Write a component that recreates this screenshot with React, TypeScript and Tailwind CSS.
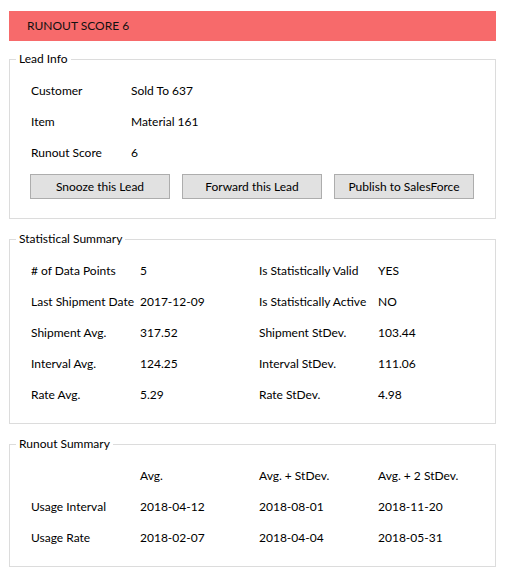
import type { ReactNode } from 'react'

type Pair = [string, string]

const leadInfo: Pair[] = [
  ['Customer', 'Sold To 637'],
  ['Item', 'Material 161'],
  ['Runout Score', '6'],
]

const statsLeft: Pair[] = [
  ['# of Data Points', '5'],
  ['Last Shipment Date', '2017-12-09'],
  ['Shipment Avg.', '317.52'],
  ['Interval Avg.', '124.25'],
  ['Rate Avg.', '5.29'],
]

const statsRight: Pair[] = [
  ['Is Statistically Valid', 'YES'],
  ['Is Statistically Active', 'NO'],
  ['Shipment StDev.', '103.44'],
  ['Interval StDev.', '111.06'],
  ['Rate StDev.', '4.98'],
]

const runoutRows: string[][] = [
  ['', 'Avg.', 'Avg. + StDev.', 'Avg. + 2 StDev.'],
  ['Usage Interval', '2018-04-12', '2018-08-01', '2018-11-20'],
  ['Usage Rate', '2018-02-07', '2018-04-04', '2018-05-31'],
]

function GroupBox({ title, children }: { title: string; children: ReactNode }) {
  return (
    <fieldset className="border border-[#dcdcdc]">
      <legend className="ml-[6px] px-[3px] leading-4">{title}</legend>
      <div className="px-[21px] pt-[8px] pb-[13px]">{children}</div>
    </fieldset>
  )
}

function ActionButton({ children }: { children: ReactNode }) {
  return (
    <button className="h-[25px] w-[140px] border border-[#adadad] bg-[#e1e1e1] text-center leading-4">
      {children}
    </button>
  )
}

export default function App() {
  return (
    <div className="flex w-[508px] flex-col gap-[12px] bg-white pr-[12px] pl-[9px] pt-[11px] text-[12px] text-black [font-family:Lato,'Liberation_Sans',sans-serif]">
      <div className="mb-[-2px] flex h-[30px] items-center bg-[#f76a6b] pl-[18px] text-[#111]">
        RUNOUT SCORE 6
      </div>

      <GroupBox title="Lead Info">
        {leadInfo.map(([label, value]) => (
          <div key={label} className="flex h-[31px] items-center">
            <span className="w-[100px]">{label}</span>
            <span>{value}</span>
          </div>
        ))}
        <div className="mt-[6px] mb-[6px] -ml-[1px] flex gap-[12px]">
          <ActionButton>Snooze this Lead</ActionButton>
          <ActionButton>Forward this Lead</ActionButton>
          <ActionButton>Publish to SalesForce</ActionButton>
        </div>
      </GroupBox>

      <GroupBox title="Statistical Summary">
        {statsLeft.map(([label, value], i) => (
          <div key={label} className="flex h-[31px] items-center">
            <span className="w-[109px]">{label}</span>
            <span className="w-[119px]">{value}</span>
            <span className="w-[119px]">{statsRight[i][0]}</span>
            <span>{statsRight[i][1]}</span>
          </div>
        ))}
      </GroupBox>

      <GroupBox title="Runout Summary">
        {runoutRows.map((row, i) => (
          <div key={i} className="flex h-[31px] items-center">
            <span className="w-[109px]">{row[0]}</span>
            <span className="w-[119px]">{row[1]}</span>
            <span className="w-[119px]">{row[2]}</span>
            <span>{row[3]}</span>
          </div>
        ))}
      </GroupBox>
    </div>
  )
}
